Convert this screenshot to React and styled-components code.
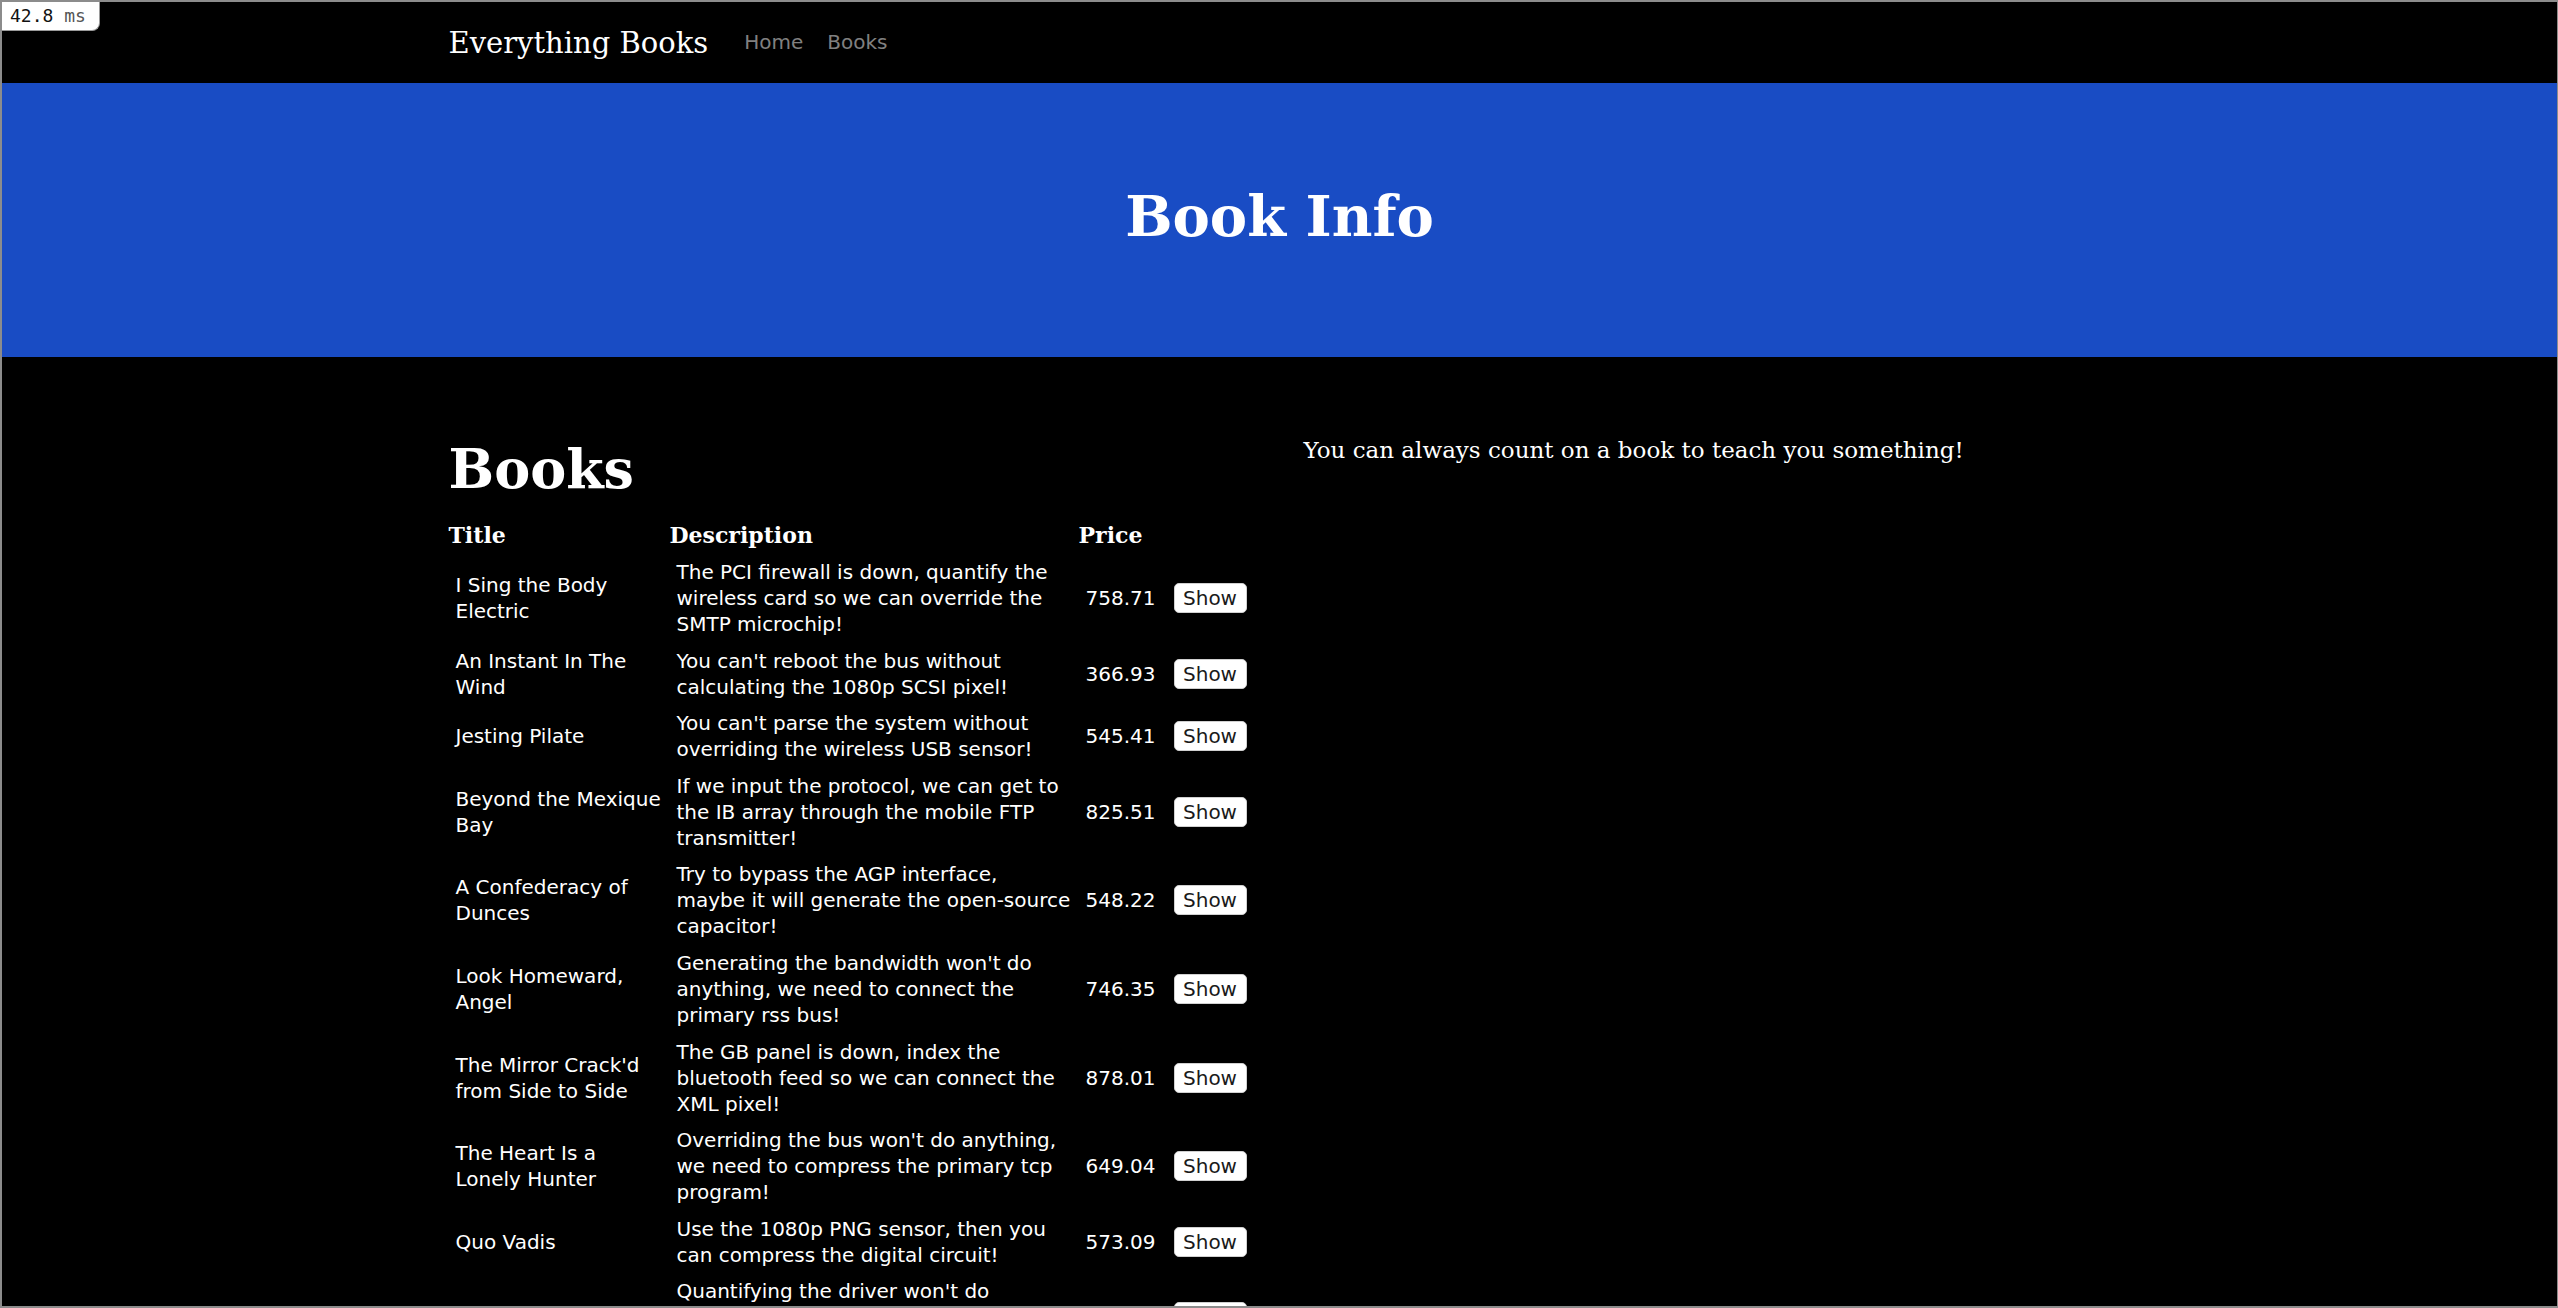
import React from 'react';
import styled, { createGlobalStyle } from 'styled-components';

const books = [
  { id: 1, title: 'I Sing the Body Electric', description: 'The PCI firewall is down, quantify the wireless card so we can override the SMTP microchip!', price: '758.71' },
  { id: 2, title: 'An Instant In The Wind', description: "You can't reboot the bus without calculating the 1080p SCSI pixel!", price: '366.93' },
  { id: 3, title: 'Jesting Pilate', description: "You can't parse the system without overriding the wireless USB sensor!", price: '545.41' },
  { id: 4, title: 'Beyond the Mexique Bay', description: 'If we input the protocol, we can get to the IB array through the mobile FTP transmitter!', price: '825.51' },
  { id: 5, title: 'A Confederacy of Dunces', description: 'Try to bypass the AGP interface, maybe it will generate the open-source capacitor!', price: '548.22' },
  { id: 6, title: 'Look Homeward, Angel', description: "Generating the bandwidth won't do anything, we need to connect the primary rss bus!", price: '746.35' },
  { id: 7, title: "The Mirror Crack'd from Side to Side", description: 'The GB panel is down, index the bluetooth feed so we can connect the XML pixel!', price: '878.01' },
  { id: 8, title: 'The Heart Is a Lonely Hunter', description: "Overriding the bus won't do anything, we need to compress the primary tcp program!", price: '649.04' },
  { id: 9, title: 'Quo Vadis', description: 'Use the 1080p PNG sensor, then you can compress the digital circuit!', price: '573.09' },
  { id: 10, title: 'Ah, Wilderness!', description: "Quantifying the driver won't do anything, we need to index the neural card!", price: '612.38' },
];

export default function App() {
  return (
    <>
      <GlobalStyle />
      <Frame>
        <Timer>
          42.8 <span>ms</span>
        </Timer>
        <Nav>
          <Container>
            <NavInner>
              <Brand href="#">Everything Books</Brand>
              <NavLink href="#">Home</NavLink>
              <NavLink href="#">Books</NavLink>
            </NavInner>
          </Container>
        </Nav>
        <Jumbotron>
          <JumboTitle>Book Info</JumboTitle>
        </Jumbotron>
        <Container>
          <Columns>
            <section>
              <PageTitle>Books</PageTitle>
              <Table>
                <colgroup>
                  <col style={{ width: 221 }} />
                  <col style={{ width: 409 }} />
                  <col style={{ width: 88 }} />
                  <col style={{ width: 84 }} />
                </colgroup>
                <thead>
                  <tr>
                    <Th>Title</Th>
                    <Th>Description</Th>
                    <Th>Price</Th>
                    <Th />
                  </tr>
                </thead>
                <tbody>
                  {books.map((book) => (
                    <tr key={book.id}>
                      <Td>{book.title}</Td>
                      <Td $padRight={7}>{book.description}</Td>
                      <Td>{book.price}</Td>
                      <Td>
                        <ShowButton>Show</ShowButton>
                      </Td>
                    </tr>
                  ))}
                </tbody>
              </Table>
            </section>
            <aside>
              <Tagline>You can always count on a book to teach you something!</Tagline>
            </aside>
          </Columns>
        </Container>
      </Frame>
    </>
  );
}

const GlobalStyle = createGlobalStyle`
  html, body {
    margin: 0;
    padding: 0;
    background: #000;
  }
  * {
    box-sizing: border-box;
  }
`;

const Frame = styled.div`
  position: relative;
  height: 100vh;
  overflow: hidden;
  background: #000;
  color: #fff;
  border: 2px solid #8c8c8c;
  border-right-width: 1px;
  font-family: 'DejaVu Sans', Verdana, sans-serif;
`;

const Timer = styled.div`
  position: absolute;
  top: 0;
  left: 0;
  z-index: 5;
  width: 98px;
  height: 29px;
  padding: 3px 0 0 8px;
  background: #fff;
  border: 1px solid #9a9a9a;
  border-top: none;
  border-left: none;
  border-bottom-right-radius: 8px;
  font-family: 'DejaVu Sans Mono', 'Liberation Mono', monospace;
  font-size: 18px;
  line-height: 22px;
  color: #111;
  span {
    color: #555;
  }
`;

const Container = styled.div`
  width: 1710px;
  margin: 0 auto;
  padding: 0 24px;
`;

const Nav = styled.nav`
  height: 81px;
  background: #000;
  display: flex;
  align-items: center;
`;

const NavInner = styled.div`
  display: flex;
  align-items: center;
`;

const Brand = styled.a`
  font-family: 'DejaVu Serif', Georgia, serif;
  font-size: 29px;
  line-height: 1.2;
  color: #fff;
  text-decoration: none;
  margin-right: 36px;
  margin-top: 2px;
`;

const NavLink = styled.a`
  font-size: 20px;
  line-height: 24px;
  color: #808080;
  text-decoration: none;
  margin-right: 24px;
`;

const Jumbotron = styled.header`
  height: 274px;
  background: #194cc4;
  padding-top: 100px;
  text-align: center;
`;

const JumboTitle = styled.h1`
  margin: 0;
  font-family: 'DejaVu Serif', Georgia, serif;
  font-weight: 700;
  font-size: 56px;
  line-height: 1.2;
  color: #fff;
`;

const Columns = styled.div`
  display: grid;
  grid-template-columns: 1fr 1fr;
  column-gap: 48px;
  padding-top: 76px;
`;

const PageTitle = styled.h1`
  margin: 4px 0 18px;
  font-family: 'DejaVu Serif', Georgia, serif;
  font-weight: 700;
  font-size: 54px;
  line-height: 1.2;
`;

const Table = styled.table`
  table-layout: fixed;
  width: 802px;
  border-collapse: collapse;
`;

const Th = styled.th`
  padding: 0 0 4px;
  text-align: left;
  font-family: 'DejaVu Serif', Georgia, serif;
  font-weight: 700;
  font-size: 22px;
  line-height: 30px;
`;

const Td = styled.td`
  padding: 5.3px ${(props) => props.$padRight ?? 6}px 5.3px 7px;
  vertical-align: middle;
  font-size: 20px;
  line-height: 26px;
`;

const ShowButton = styled.button`
  display: block;
  width: 73px;
  height: 30px;
  padding: 0;
  background: #fff;
  color: #1a1a1a;
  border: 1px solid #d0d0d0;
  border-radius: 5px;
  font-family: 'DejaVu Sans', Verdana, sans-serif;
  font-size: 20px;
  line-height: 28px;
  cursor: pointer;
`;

const Tagline = styled.p`
  margin: 0;
  font-family: 'DejaVu Serif', Georgia, serif;
  font-size: 23px;
  line-height: 1.5;
`;
